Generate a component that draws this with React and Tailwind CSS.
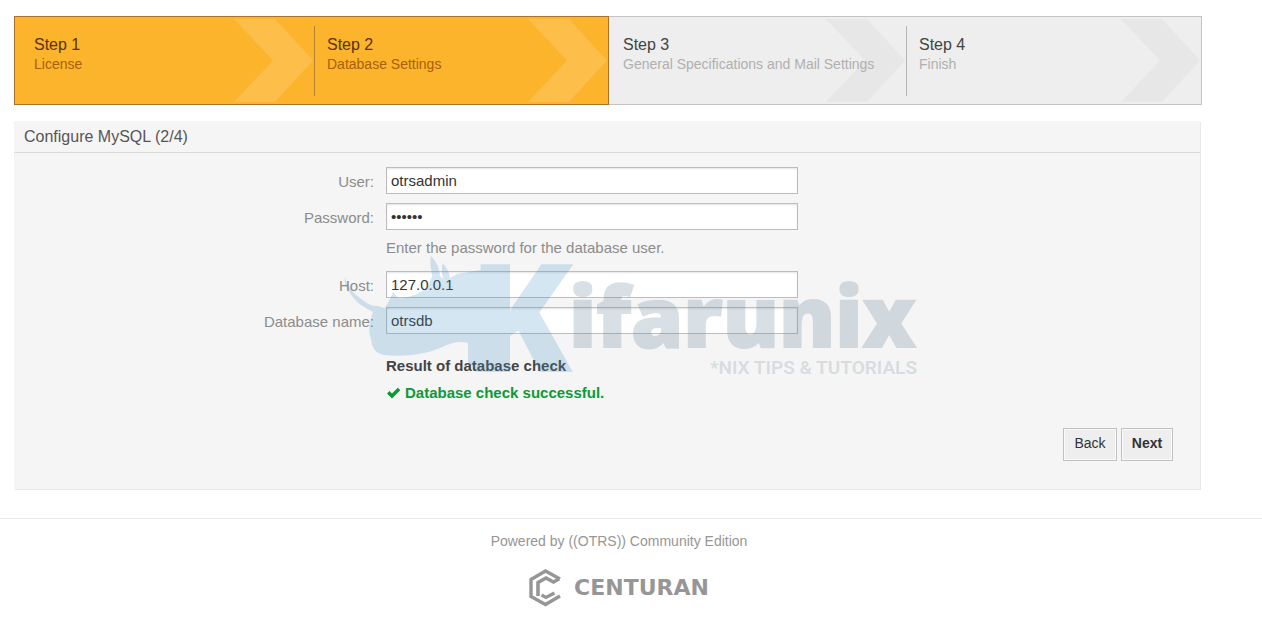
import React from "react";

const steps = [
  { title: "Step 1", detail: "License", done: true },
  { title: "Step 2", detail: "Database Settings", done: true },
  { title: "Step 3", detail: "General Specifications and Mail Settings", done: false },
  { title: "Step 4", detail: "Finish", done: false },
];

const frames = [
  "border-y border-l border-[#a8722a] bg-[#fcb42c] pl-[19px]",
  "border-y border-r border-[#a8722a] bg-[#fcb42c] pl-[13px]",
  "border-y border-[#c4c4c4] bg-[#eeeeee] pl-[14px]",
  "border-y border-r border-[#c4c4c4] bg-[#eeeeee] pl-[13px]",
];

function Step({ step, index }) {
  const divided = index % 2 === 1;
  return (
    <li className={`relative h-[89px] pt-[18px] ${frames[index]}`}>
      <svg
        className={`absolute inset-y-0 right-0 h-full w-[80px] ${step.done ? "fill-[#fdbe4a]" : "fill-[#e7e7e7]"}`}
        viewBox="0 0 80 87"
        preserveAspectRatio="none"
        aria-hidden="true"
      >
        <path d="M0 2H41L79 43.5L41 85H0L39 43.5Z" />
      </svg>
      {divided && (
        <span
          className={`absolute left-0 top-[9px] h-[70px] w-px ${step.done ? "bg-[#b5832f]" : "bg-[#b5b5b5]"}`}
        />
      )}
      <div className="relative">
        <h2 className={`text-base leading-5 ${step.done ? "text-[#5a3206]" : "text-[#444444]"}`}>{step.title}</h2>
        <p className={`text-sm leading-[18px] ${step.done ? "text-[#a96009]" : "text-[#b0b0b0]"}`}>{step.detail}</p>
      </div>
    </li>
  );
}

function Field({ id, label, type = "text", value }) {
  return (
    <div className="flex gap-3">
      <label htmlFor={id} className="w-[360px] shrink-0 text-right text-[15px] leading-[30px] text-[#8c8c8c]">
        {label}
      </label>
      <input
        id={id}
        type={type}
        defaultValue={value}
        className="h-[27px] w-full max-w-[412px] border border-[#bdbdbd] bg-white px-1 text-[15px] text-[#333333] shadow-[inset_0_1px_2px_#e4e4e4] outline-none"
      />
    </div>
  );
}

function Watermark() {
  return (
    <div className="pointer-events-none absolute inset-0 flex items-center justify-center" aria-hidden="true">
      <svg className="overflow-visible" width="574" height="124" viewBox="0 0 574 124">
        <g className="fill-[#4a95c5]" opacity="0.23">
          <path d="M1 25C3 34 9 41 16 46C22 51 27 54 33 54L41 56L46 47L49 40L54 46C62 47 74 42 80 38C84 34 86 30 88 25C88 19 85 10 87 4C92 9 95 15 96 24L99 27C98 20 97 15 99 11C103 17 106 21 106 26L113 22L166 13V120H133C131 116 129 114 124 112V91C113 88 105 92 96 96C80 103 58 105 40 103C31 101 28 96 27 87C24 79 25 71 29 60C17 54 10 48 6 41C2 35 0 31 1 25Z" />
          <text x="125" y="120" fontFamily="Open Sans, sans-serif" fontWeight="800" fontSize="151">
            K
          </text>
        </g>
        <text
          x="225"
          y="95"
          className="fill-[#608094] stroke-[#608094]"
          strokeWidth="2"
          opacity="0.24"
          fontFamily="Open Sans, sans-serif"
          fontWeight="800"
          fontSize="84"
        >
          ifarunix
        </text>
        <text
          x="573"
          y="122"
          textAnchor="end"
          className="fill-[#608094]"
          opacity="0.2"
          fontFamily="Roboto, sans-serif"
          fontWeight="600"
          fontSize="19"
        >
          *NIX TIPS &amp; TUTORIALS
        </text>
      </svg>
    </div>
  );
}

function CenturanLogo() {
  return (
    <a href="#centuran" className="flex items-center gap-3 text-[#969696]">
      <svg width="33" height="38" viewBox="0 0 33 38" fill="none" stroke="currentColor" aria-hidden="true">
        <path d="M31 10L16.500 2L2 10.500V27.500L16.500 35.500L31 27" strokeWidth="3.400" />
        <path d="M30 10L24.500 13L17 9L9 13.500V27" strokeWidth="3.600" />
        <path d="M12.500 26L17 28.500L25.500 24" strokeWidth="3.200" />
      </svg>
      <span className="font-['DejaVu_Sans'] text-[22px] font-bold leading-7">CENTURAN</span>
    </a>
  );
}

export default function App() {
  return (
    <div className="relative bg-white pb-5 font-['Liberation_Sans',Arial,sans-serif]">
      <main className="pl-[14px] pr-[60px] pt-4">
        <ol className="grid grid-cols-[300fr_295fr_297fr_296fr]">
          {steps.map((step, i) => (
            <Step key={step.title} step={step} index={i} />
          ))}
        </ol>

        <section className="mr-[2px] mt-4 bg-[#f5f5f5] shadow-[1px_1px_0_#e8e8e8]">
          <h1 className="border-b border-[#dadada] px-[10px] text-base leading-[31px] text-[#555555]">
            Configure MySQL (2/4)
          </h1>
          <form className="pb-7 pt-[14px]" onSubmit={(e) => e.preventDefault()}>
            <div className="flex flex-col gap-[9px]">
              <Field id="user" label="User:" value="otrsadmin" />
            </div>
            <div className="pt-[6px]">
              <Field id="password" label="Password:" type="password" value="secret" />
            </div>
            <p className="pb-[13px] pl-[372px] pt-[5px] text-[15px] leading-5 text-[#8c8c8c]">
              Enter the password for the database user.
            </p>
            <div className="flex flex-col gap-[6px]">
              <Field id="host" label="Host:" value="127.0.0.1" />
              <Field id="database" label="Database name:" value="otrsdb" />
            </div>
            <div className="pl-[372px] pt-[15px] text-[15px] font-bold leading-[27px]">
              <h3 className="text-[#444444]">Result of database check</h3>
              <p className="flex items-center gap-1 text-[#0c9a36]">
                <svg width="15" height="12" viewBox="0 0 15 12" aria-hidden="true">
                  <path d="M1 6.500L3.500 4L6 6.500L11.800 0.800L14.300 3.200L6 11.500Z" fill="currentColor" />
                </svg>
                Database check successful.
              </p>
            </div>
            <div className="flex justify-end gap-1 pr-[27px] pt-[22px] text-sm text-[#333333]">
              <button
                type="button"
                className="h-[33px] w-[54px] border border-[#c0c0c0] bg-[#eeeeee] pb-1 shadow-[inset_0_0_0_1px_#fafafa]"
              >
                Back
              </button>
              <button
                type="submit"
                className="h-[33px] w-[52px] border border-[#c0c0c0] bg-[#eeeeee] pb-1 font-bold shadow-[inset_0_0_0_1px_#fafafa]"
              >
                Next
              </button>
            </div>
          </form>
        </section>
      </main>

      <footer className="mt-[29px] flex flex-col items-center gap-[18px] border-t border-[#ebebeb] pr-6 pt-3">
        <p className="text-sm leading-5 text-[#969696]">Powered by ((OTRS)) Community Edition</p>
        <CenturanLogo />
      </footer>
      <Watermark />
    </div>
  );
}
